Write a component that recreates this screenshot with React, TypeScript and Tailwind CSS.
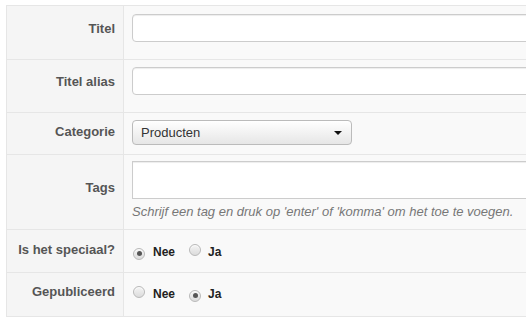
import React from "react";

const font = { fontFamily: '"Liberation Sans", Arial, sans-serif' };

function Radio({ checked }: { checked?: boolean }) {
  return (
    <span className="relative inline-flex h-[12px] w-[12px] items-center justify-center rounded-full border border-[#b9b9b9] bg-gradient-to-b from-[#f4f4f4] to-[#dcdcdc] shadow-[inset_0_1px_1px_rgba(255,255,255,0.8)]">
      {checked && <span className="h-[5px] w-[5px] rounded-full bg-[#555]" />}
    </span>
  );
}

function RadioGroup({ value }: { value: "nee" | "ja" }) {
  return (
    <div className="flex h-[16px] items-center text-[12px] font-bold leading-[16px] text-[#222]">
      <span className="ml-[1px]"><Radio checked={value === "nee"} /></span>
      <span className="ml-[8px]">Nee</span>
      <span className="ml-[14px]"><Radio checked={value === "ja"} /></span>
      <span className="ml-[7px]">Ja</span>
    </div>
  );
}

function Row({
  label,
  h,
  lpt,
  cpt,
  first,
  children,
}: {
  label: string;
  h: number;
  lpt: number;
  cpt: number;
  first?: boolean;
  children: React.ReactNode;
}) {
  return (
    <div
      className={`flex ${first ? "" : "border-t border-[#e6e6e6]"}`}
      style={{ height: h + (first ? 0 : 1) }}
    >
      <div
        className="w-[117px] shrink-0 border-r border-[#e6e6e6] bg-[#f5f5f5] pr-[8px] text-right text-[13px] font-bold leading-[16px] text-[#555]"
        style={{ paddingTop: lpt }}
      >
        {label}
      </div>
      <div className="flex-1 bg-[#f9f9f9] pl-[8px]" style={{ paddingTop: cpt }}>
        {children}
      </div>
    </div>
  );
}

export default function App() {
  const inputCls =
    "block h-[28px] w-[420px] rounded-[4px] border border-[#cccccc] bg-white shadow-[inset_0_1px_1px_rgba(0,0,0,0.075)]";
  return (
    <div className="h-[326px] w-[526px] overflow-hidden bg-white" style={font}>
      <div className="ml-[6px] mt-[5px] w-[560px] border-y border-l border-[#e6e6e6]">
        <Row label="Titel" h={53} lpt={15} cpt={8} first>
          <div className={inputCls} />
        </Row>
        <Row label="Titel alias" h={52} lpt={14} cpt={7}>
          <div className={inputCls} />
        </Row>
        <Row label="Categorie" h={41} lpt={11} cpt={7}>
          <div className="flex h-[25px] w-[220px] items-center justify-between rounded-[4px] border border-[#bbbbbb] bg-gradient-to-b from-white to-[#e6e6e6] pl-[8px] pr-[9px] text-[13px] leading-[16px] text-[#333] shadow-[inset_0_1px_0_rgba(255,255,255,0.6)]">
            <span>Producten</span>
            <svg width="8" height="4" viewBox="0 0 8 4">
              <path d="M0 0 L8 0 L4 4 Z" fill="#111" />
            </svg>
          </div>
        </Row>
        <Row label="Tags" h={74} lpt={25} cpt={6}>
          <div className="block h-[38px] w-[420px] border border-[#cccccc] bg-white shadow-[inset_0_1px_1px_rgba(0,0,0,0.075)]" />
          <div className="mt-[5px] text-[13px] italic leading-[16px] text-[#777]">
            Schrijf een tag en druk op 'enter' of 'komma' om het toe te voegen.
          </div>
        </Row>
        <Row label="Is het speciaal?" h={42} lpt={12} cpt={14}>
          <RadioGroup value="nee" />
        </Row>
        <Row label="Gepubliceerd" h={43} lpt={11} cpt={13}>
          <RadioGroup value="ja" />
        </Row>
      </div>
    </div>
  );
}
